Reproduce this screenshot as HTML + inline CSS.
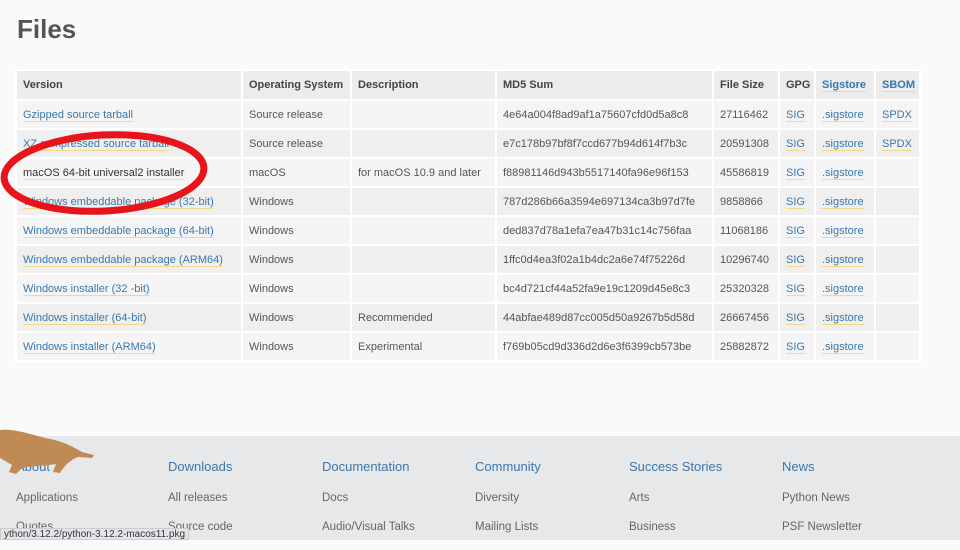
<!DOCTYPE html>
<html><head><meta charset="utf-8"><style>
*{margin:0;padding:0;box-sizing:border-box}
body{width:960px;height:540px;overflow:hidden;background:#fafafa;font-family:"Liberation Sans",sans-serif;position:relative;color:#444}
h1{position:absolute;left:17px;top:14px;font-size:26px;font-weight:bold;color:#555}
table{position:absolute;left:15px;top:69px;border-collapse:separate;border-spacing:2px;font-size:11px;background:#fff;table-layout:fixed;width:906px}
td,th{height:27px;padding:0 6px;text-align:left;vertical-align:middle;white-space:nowrap;overflow:hidden;color:#555;font-weight:normal}
th{background:#ececec;color:#444;font-weight:bold;height:28px}
tr:nth-child(even) td{background:#f5f5f5}
tr:nth-child(odd) td{background:#efefef}
a{color:#3a78ad;text-decoration:none;border-bottom:1px solid #f4d98a}
.k{color:#333}
.foot{position:absolute;left:0;top:436px;width:960px;height:104px;background:#e6e8ea}
.col{position:absolute;top:459px;font-size:12px}
.col b{display:block;color:#3a78ad;font-weight:normal;font-size:13px;height:33px}
.col span{display:block;color:#666;height:29px;font-size:11.5px}
.status{position:absolute;left:0;top:528px;height:12px;background:#e2e6ea;border:1px solid #ccc;font-size:10px;color:#333;padding:0 3px;line-height:11px;white-space:nowrap}
</style></head><body>
<h1>Files</h1>
<table>
<colgroup><col style="width:224px"><col style="width:107px"><col style="width:143px"><col style="width:215px"><col style="width:64px"><col style="width:34px"><col style="width:58px"><col style="width:43px"></colgroup>
<tr><th>Version</th><th>Operating System</th><th>Description</th><th>MD5 Sum</th><th>File Size</th><th>GPG</th><th><a>Sigstore</a></th><th><a>SBOM</a></th></tr>
<tr><td><a>Gzipped source tarball</a></td><td>Source release</td><td></td><td>4e64a004f8ad9af1a75607cfd0d5a8c8</td><td>27116462</td><td><a>SIG</a></td><td><a>.sigstore</a></td><td><a>SPDX</a></td></tr>
<tr><td><a>XZ compressed source tarball</a></td><td>Source release</td><td></td><td>e7c178b97bf8f7ccd677b94d614f7b3c</td><td>20591308</td><td><a>SIG</a></td><td><a>.sigstore</a></td><td><a>SPDX</a></td></tr>
<tr><td><a class="k">macOS 64-bit universal2 installer</a></td><td>macOS</td><td>for macOS 10.9 and later</td><td>f88981146d943b5517140fa96e96f153</td><td>45586819</td><td><a>SIG</a></td><td><a>.sigstore</a></td><td></td></tr>
<tr><td><a>Windows embeddable package (32-bit)</a></td><td>Windows</td><td></td><td>787d286b66a3594e697134ca3b97d7fe</td><td>9858866</td><td><a>SIG</a></td><td><a>.sigstore</a></td><td></td></tr>
<tr><td><a>Windows embeddable package (64-bit)</a></td><td>Windows</td><td></td><td>ded837d78a1efa7ea47b31c14c756faa</td><td>11068186</td><td><a>SIG</a></td><td><a>.sigstore</a></td><td></td></tr>
<tr><td><a>Windows embeddable package (ARM64)</a></td><td>Windows</td><td></td><td>1ffc0d4ea3f02a1b4dc2a6e74f75226d</td><td>10296740</td><td><a>SIG</a></td><td><a>.sigstore</a></td><td></td></tr>
<tr><td><a>Windows installer (32 -bit)</a></td><td>Windows</td><td></td><td>bc4d721cf44a52fa9e19c1209d45e8c3</td><td>25320328</td><td><a>SIG</a></td><td><a>.sigstore</a></td><td></td></tr>
<tr><td><a>Windows installer (64-bit)</a></td><td>Windows</td><td>Recommended</td><td>44abfae489d87cc005d50a9267b5d58d</td><td>26667456</td><td><a>SIG</a></td><td><a>.sigstore</a></td><td></td></tr>
<tr><td><a>Windows installer (ARM64)</a></td><td>Windows</td><td>Experimental</td><td>f769b05cd9d336d2d6e3f6399cb573be</td><td>25882872</td><td><a>SIG</a></td><td><a>.sigstore</a></td><td></td></tr>
</table>
<svg style="position:absolute;left:0;top:125px" width="220" height="100"><ellipse cx="104" cy="48" rx="100" ry="38" fill="none" stroke="#e8141b" stroke-width="7" transform="rotate(-3 104 48)"/></svg>
<div class="foot"></div>
<div class="col" style="left:16px"><b>About</b><span>Applications</span><span>Quotes</span></div>
<div class="col" style="left:168px"><b>Downloads</b><span>All releases</span><span>Source code</span></div>
<div class="col" style="left:322px"><b>Documentation</b><span>Docs</span><span>Audio/Visual Talks</span></div>
<div class="col" style="left:475px"><b>Community</b><span>Diversity</span><span>Mailing Lists</span></div>
<div class="col" style="left:629px"><b>Success Stories</b><span>Arts</span><span>Business</span></div>
<div class="col" style="left:782px"><b>News</b><span>Python News</span><span>PSF Newsletter</span></div>
<svg style="position:absolute;left:0;top:428px" width="100" height="50"><path d="M0 2 C12 0 30 6 45 10 C60 12 72 18 82 24 L94 27 L92 30 L78 29 C70 32 64 38 60 45 L53 44 L56 36 C45 38 30 38 22 40 L16 46 L9 44 L12 37 L0 30 Z" fill="#c08a55"/></svg>
<div class="status">ython/3.12.2/python-3.12.2-macos11.pkg</div>
</body></html>
